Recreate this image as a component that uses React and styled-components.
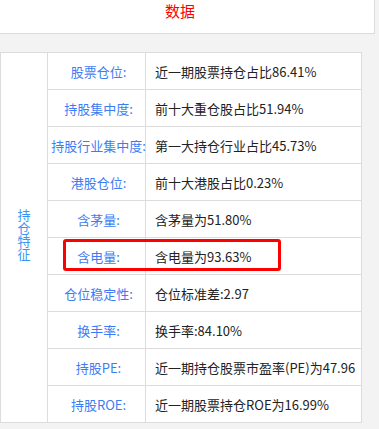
import React from "react";
import styled, { createGlobalStyle } from "styled-components";

const Global = createGlobalStyle`
  html, body { margin: 0; padding: 0; background: #f3f3f3; }
  body { font-family: "Noto Sans CJK SC", "Noto Sans", sans-serif; }
  * { box-sizing: border-box; }
`;

const Page = styled.div`
  width: 379px;
  height: 429px;
  background: #f3f3f3;
`;

const Header = styled.div`
  width: 375px;
  height: 34px;
  background: #fff;
  border-right: 1px solid #dcdcdc;
  border-bottom: 1px solid #dcdcdc;
  padding-right: 14px;
  text-align: center;
  font-size: 15px;
  line-height: 21px;
  color: #ff0000;
`;

const TableWrap = styled.div`
  position: relative;
  margin-top: 18px;
  width: 362px;
`;

const Grid = styled.div`
  display: grid;
  grid-template-columns: 47px 98px 216px;
  grid-template-rows: repeat(10, 37px);
  border-left: 1px solid #dcdcdc;
  border-top: 1px solid #dcdcdc;
  background: #fff;
  font-size: 13px;
`;

const Cell = styled.div`
  border-right: 1px solid #dcdcdc;
  border-bottom: 1px solid #dcdcdc;
  display: flex;
  align-items: center;
  white-space: nowrap;
`;

const GroupCell = styled(Cell)`
  grid-row: 1 / span 10;
  justify-content: center;
  padding-bottom: 6px;
`;

const VerticalText = styled.span`
  writing-mode: vertical-lr;
  color: #3a95f2;
  font-size: 13px;
  line-height: 13px;
  letter-spacing: 0;
`;

const LabelCell = styled(Cell)`
  justify-content: center;
  padding-left: 4px;
  color: #3d7cf4;
`;

const ValueCell = styled(Cell)`
  padding-left: 9px;
  color: #222;
`;

const Highlight = styled.div`
  position: absolute;
  left: 63px;
  top: ${(p) => p.$top}px;
  width: 218px;
  height: 32px;
  border: 3px solid #ff0000;
  border-radius: 3px;
  pointer-events: none;
`;

const rows = [
  ["股票仓位:", "近一期股票持仓占比86.41%"],
  ["持股集中度:", "前十大重仓股占比51.94%"],
  ["持股行业集中度:", "第一大持仓行业占比45.73%"],
  ["港股仓位:", "前十大港股占比0.23%"],
  ["含茅量:", "含茅量为51.80%"],
  ["含电量:", "含电量为93.63%"],
  ["仓位稳定性:", "仓位标准差:2.97"],
  ["换手率:", "换手率:84.10%"],
  ["持股PE:", "近一期持仓股票市盈率(PE)为47.96"],
  ["持股ROE:", "近一期股票持仓ROE为16.99%"],
];

export default function App() {
  const hi = 5;
  return (
    <Page>
      <Global />
      <Header>数据</Header>
      <TableWrap>
        <Grid>
          <GroupCell>
            <VerticalText>持仓特征</VerticalText>
          </GroupCell>
          {rows.map(([l, v]) => (
            <React.Fragment key={l}>
              <LabelCell>{l}</LabelCell>
              <ValueCell>{v}</ValueCell>
            </React.Fragment>
          ))}
        </Grid>
        <Highlight $top={hi * 37 + 2} />
      </TableWrap>
    </Page>
  );
}
